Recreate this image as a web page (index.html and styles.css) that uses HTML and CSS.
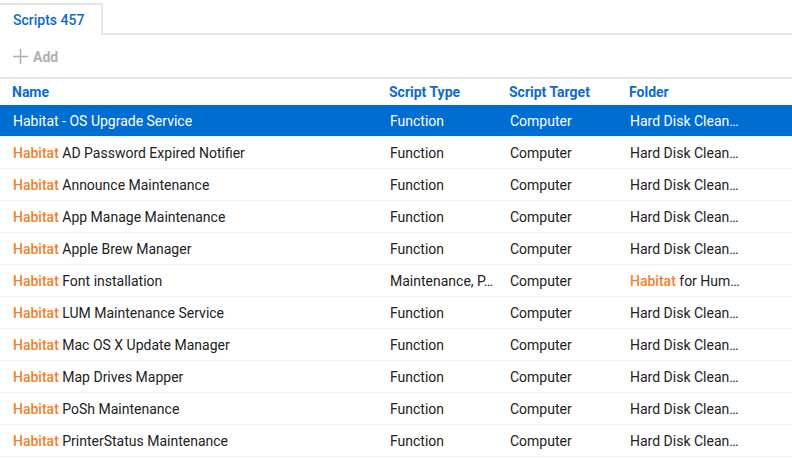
FILE: index.html
```html
<!DOCTYPE html>
<html lang="en">
<head>
    <meta charset="UTF-8">
    <title>Scripts</title>
    <link rel="stylesheet" href="styles.css">
</head>
<body>
    <nav class="tabs">
        <a href="#scripts" class="tab">Scripts 457</a>
    </nav>
    <div class="toolbar">
        <button type="button" class="add">
            <svg width="16" height="16" viewBox="0 0 16 16"><path d="M8.5 0v15M1 7.5h15" stroke="currentColor" stroke-width="1.6"/></svg>
            Add
        </button>
    </div>
    <table id="scripts">
        <colgroup>
            <col class="col-name">
            <col class="col-type">
            <col class="col-target">
            <col class="col-folder">
            <col>
        </colgroup>
        <thead>
            <tr><th>Name</th><th>Script Type</th><th>Script Target</th><th>Folder</th><th></th></tr>
        </thead>
        <tbody>
            <tr class="selected"><td>Habitat - OS Upgrade Service</td><td>Function</td><td>Computer</td><td>Hard Disk Clean…</td><td></td></tr>
            <tr><td><mark>Habitat</mark> AD Password Expired Notifier</td><td>Function</td><td>Computer</td><td>Hard Disk Clean…</td><td></td></tr>
            <tr><td><mark>Habitat</mark> Announce Maintenance</td><td>Function</td><td>Computer</td><td>Hard Disk Clean…</td><td></td></tr>
            <tr><td><mark>Habitat</mark> App Manage Maintenance</td><td>Function</td><td>Computer</td><td>Hard Disk Clean…</td><td></td></tr>
            <tr><td><mark>Habitat</mark> Apple Brew Manager</td><td>Function</td><td>Computer</td><td>Hard Disk Clean…</td><td></td></tr>
            <tr><td><mark>Habitat</mark> Font installation</td><td>Maintenance, P…</td><td>Computer</td><td><mark>Habitat</mark> for Hum…</td><td></td></tr>
            <tr><td><mark>Habitat</mark> LUM Maintenance Service</td><td>Function</td><td>Computer</td><td>Hard Disk Clean…</td><td></td></tr>
            <tr><td><mark>Habitat</mark> Mac OS X Update Manager</td><td>Function</td><td>Computer</td><td>Hard Disk Clean…</td><td></td></tr>
            <tr><td><mark>Habitat</mark> Map Drives Mapper</td><td>Function</td><td>Computer</td><td>Hard Disk Clean…</td><td></td></tr>
            <tr><td><mark>Habitat</mark> PoSh Maintenance</td><td>Function</td><td>Computer</td><td>Hard Disk Clean…</td><td></td></tr>
            <tr><td><mark>Habitat</mark> PrinterStatus Maintenance</td><td>Function</td><td>Computer</td><td>Hard Disk Clean…</td><td></td></tr>
        </tbody>
    </table>
</body>
</html>
```
FILE: styles.css
```css
body {
    margin: 0;
    padding-top: 3px;
    font-family: Roboto, sans-serif;
    font-size: 14px;
    line-height: 20px;
    color: #222;
    background-color: #fff;
}
.tabs {
    display: flex;
    border-bottom: 2px solid #e6e6e6;
}
.tab {
    margin-bottom: -2px;
    padding: 5px 17px 5px 13px;
    border-top: 2px solid #e6e6e6;
    border-right: 2px solid #e6e6e6;
    background-color: #fff;
    color: #0f6acd;
    font-weight: 500;
    text-decoration: none;
}
.toolbar {
    padding: 12px 12px 10px;
    border-bottom: 2px solid #e6e6e6;
}
.add {
    display: flex;
    align-items: center;
    gap: 5px;
    padding: 0;
    border: none;
    background: none;
    color: #b0b0b0;
    font: inherit;
    font-weight: 700;
    cursor: pointer;
}
table {
    width: 100%;
    table-layout: fixed;
    border-collapse: collapse;
}
.col-name {
    width: 377px;
}
.col-type, .col-target {
    width: 120px;
}
.col-folder {
    width: 124px;
}
th {
    height: 26px;
    padding: 0 0 0 12px;
    text-align: left;
    font-weight: 700;
    color: #0f6acd;
}
td {
    height: 31px;
    padding: 0 0 0 13px;
    border-bottom: 1px solid #f2f2f2;
    white-space: nowrap;
}
.selected td {
    background-color: #006dd2;
    color: #fff;
}
mark {
    background: none;
    color: #f47f30;
    font-weight: 500;
}
```
